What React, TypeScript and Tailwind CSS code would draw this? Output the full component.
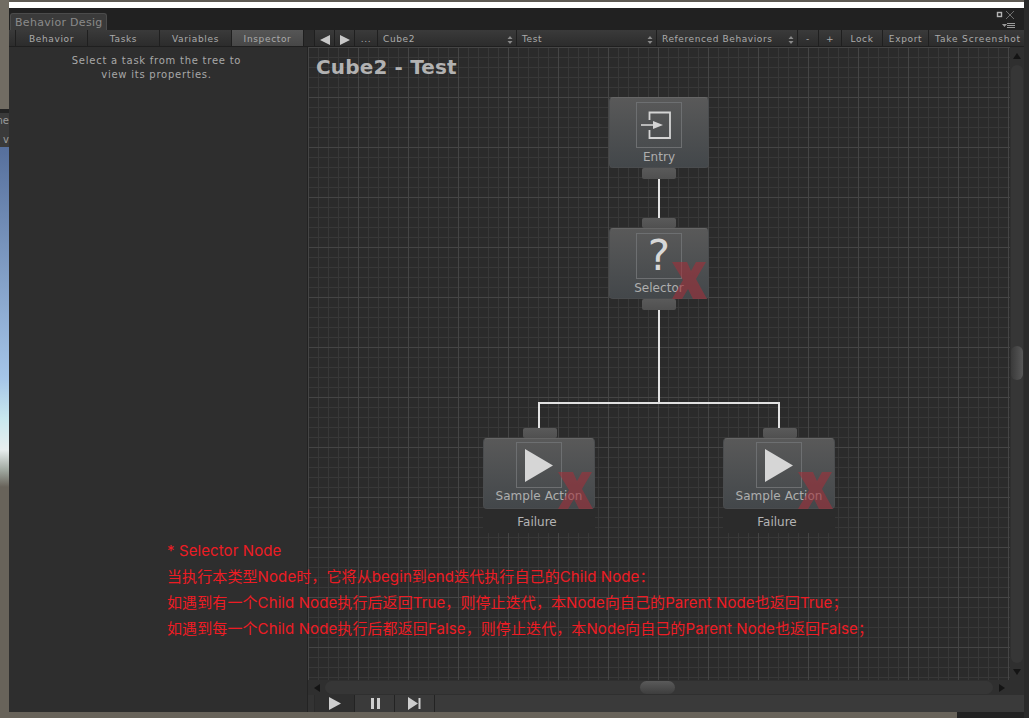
import React from "react";

const ui = { fontFamily: '"DejaVu Sans", sans-serif' };

function Spin() {
  return (
    <svg width="6" height="10" viewBox="0 0 6 10" className="shrink-0">
      <path d="M3 1 L5.5 4 H0.5 Z M3 9 L0.5 6 H5.5 Z" fill="#8a8a8a" />
    </svg>
  );
}

function Btn({ w, active, children, className = "" }: { w: string; active?: boolean; children?: React.ReactNode; className?: string }) {
  return (
    <div
      className={`${w} h-full shrink-0 flex items-center justify-center pt-[3px] border-r border-[#1f1f1f] text-[9px] tracking-[0.65px] text-[#ababab] ${
        active ? "bg-gradient-to-b from-[#565656] to-[#474747]" : "bg-gradient-to-b from-[#3a3a3a] to-[#2c2c2c]"
      } ${className}`}
    >
      {children}
    </div>
  );
}

function Drop({ w, label }: { w: string; label: string }) {
  return (
    <div className={`${w} h-full shrink-0 flex items-center justify-between pt-[3px] pl-[5px] pr-[3px] border-r border-[#1f1f1f] text-[9px] tracking-[0.6px] text-[#ababab] bg-gradient-to-b from-[#3a3a3a] to-[#2c2c2c]`}>
      <span className="whitespace-nowrap">{label}</span>
      <Spin />
    </div>
  );
}

function Connector({ h = "h-[10px]", ml = "" }: { h?: string; ml?: string }) {
  return <div className={`w-[34px] ${h} ${ml} bg-gradient-to-b from-[#5a5a5a] to-[#505050] rounded-[2px]`} />;
}

function NodeX() {
  return (
    <svg width="35" height="37" viewBox="0 0 35 37" className="absolute right-[1px] bottom-[-1px]">
      <path d="M0 0 H15 L19 9 L24 0 H34 L24 17 L35 37 H21 L16 27 L10 37 H0 L11 18 Z" fill="#a0303a" fillOpacity="0.6" />
    </svg>
  );
}

function EntryIcon() {
  return (
    <svg width="44" height="44" viewBox="0 0 44 44">
      <path d="M12.5 17 V9.5 H33 V35 H12.5 V27" fill="none" stroke="#d4d4d4" strokeWidth="1.8" />
      <path d="M4 22 H18" stroke="#d4d4d4" strokeWidth="1.6" />
      <path d="M16 18 L26 22 L16 26 Z" fill="#d4d4d4" />
    </svg>
  );
}

function PlayIcon() {
  return (
    <svg width="28" height="33" viewBox="0 0 28 33">
      <path d="M0 0 L28 16.5 L0 33 Z" fill="#d6d6d6" />
    </svg>
  );
}

function TaskNode({
  className,
  width,
  icon,
  label,
  failed,
  top = true,
  bottom = true,
  status,
  connectorMl = "",
  pad = "pt-[4px]",
  labelMt = "mt-[1px]",
}: {
  className: string;
  width: string;
  icon: React.ReactNode;
  label: string;
  failed?: boolean;
  top?: boolean;
  bottom?: boolean;
  status?: string;
  connectorMl?: string;
  pad?: string;
  labelMt?: string;
}) {
  return (
    <div className={`absolute flex flex-col items-center ${width} ${className}`}>
      {top ? <Connector ml={connectorMl} /> : null}
      <div className={`relative w-full h-[71px] rounded-[4px] border border-[#4a4c4e] border-t-[#666666] bg-gradient-to-b from-[#595959] to-[#43474a] flex flex-col items-center ${pad}`}>
        <div className="w-[46px] h-[46px] border border-[#6d6f71] flex items-center justify-center">{icon}</div>
        <div className={`${labelMt} text-[12px] leading-[16px] tracking-[0.05px] text-[#aeaeae] whitespace-nowrap`}>{label}</div>
        {failed ? <NodeX /> : null}
      </div>
      {bottom ? <Connector h="h-[11px]" /> : null}
      {status ? (
        <div className="w-full h-[24px] bg-[#2b2b2b] flex items-center justify-center pt-[2px] pr-[4px] text-[12px] text-[#b4b4b4]">{status}</div>
      ) : null}
    </div>
  );
}

export default function App() {
  return (
    <div className="w-[1029px] h-[718px] overflow-hidden flex bg-[#68635a] relative" style={ui}>
      {/* what lies behind the window, left */}
      <div className="w-[9px] h-full shrink-0 flex flex-col">
        <div className="h-[109px] shrink-0 bg-[#716c63]" />
        <div className="h-[4px] shrink-0 bg-[#232323]" />
        <div className="h-[34px] shrink-0 bg-[#3a3a3a] overflow-hidden text-[10px] leading-[13px] text-[#9a9a9a] flex flex-col items-end pt-[1px]">
          <div className="whitespace-nowrap">ne</div>
          <div className="mt-[6px]">v</div>
        </div>
        <div className="h-[340px] shrink-0 bg-[linear-gradient(to_bottom,#566f9c_0%,#a5c5e8_68%,#c8e8ee_80%,#e8eeee_89%,#a0a8a0_95%,#68635a_100%)]" />
        <div className="flex-1 bg-[#68635a]" />
      </div>

      {/* window column */}
      <div className="w-[1015px] shrink-0 h-full flex flex-col">
        <div className="h-[2px] bg-[#5e5a53]" />
        <div className="h-[6px] bg-white" />
        {/* tab strip */}
        <div className="relative h-[22px] bg-[#212121] flex items-end pl-[1px]">
          <div className="w-[97px] h-[17px] rounded-t-[3px] bg-[#3a3a3a] border border-b-0 border-[#4b4b4b] text-[11px] leading-[17px] tracking-[0.3px] pl-[4px] text-[#8a8a8a] whitespace-nowrap overflow-hidden">
            Behavior Desig
          </div>
          <svg width="28" height="20" viewBox="0 0 28 20" className="absolute right-0 top-[1px]">
            <rect x="1.5" y="3.5" width="4" height="4" fill="none" stroke="#b5b5b5" strokeWidth="1.4" />
            <path d="M10 2 L18 10 M18 2 L10 10" stroke="#6f6f6f" strokeWidth="1" />
            <path d="M6 15 H11 L8.5 18 Z" fill="#9a9a9a" />
            <path d="M11 14.5 H19 M11 16.5 H19 M11 18.5 H19" stroke="#9a9a9a" strokeWidth="1" />
          </svg>
        </div>
        {/* toolbar */}
        <div className="h-[17px] flex bg-[#2a2a2a] border-b border-[#1f1f1f]">
          <div className="w-[7px] h-full bg-gradient-to-b from-[#3a3a3a] to-[#2c2c2c] border-r border-[#1f1f1f]" />
          <Btn w="w-[72px]">Behavior</Btn>
          <Btn w="w-[72px]">Tasks</Btn>
          <Btn w="w-[72px]">Variables</Btn>
          <Btn w="w-[72px]" active>
            Inspector
          </Btn>
          <div className="w-[11px] h-full bg-[#2c2c2c] border-r border-[#1f1f1f]" />
          <Btn w="w-[20px]">
            <svg width="10" height="10" viewBox="0 0 10 10"><path d="M10 0 V10 L0 5 Z" fill="#c8c8c8" /></svg>
          </Btn>
          <Btn w="w-[20px]">
            <svg width="10" height="10" viewBox="0 0 10 10"><path d="M0 0 V10 L10 5 Z" fill="#c8c8c8" /></svg>
          </Btn>
          <Btn w="w-[23px]">...</Btn>
          <Drop w="w-[139px]" label="Cube2" />
          <Drop w="w-[140px]" label="Test" />
          <Drop w="w-[141px]" label="Referenced Behaviors" />
          <Btn w="w-[21px]">-</Btn>
          <Btn w="w-[23px]">+</Btn>
          <Btn w="w-[41px]">Lock</Btn>
          <Btn w="w-[46px]">Export</Btn>
          <div className="flex-1 h-full flex items-center justify-center pt-[3px] pl-[3px] text-[9px] tracking-[0.85px] text-[#ababab] whitespace-nowrap bg-gradient-to-b from-[#3a3a3a] to-[#2c2c2c]">
            Take Screenshot
          </div>
        </div>

        {/* body */}
        <div className="flex-1 flex min-h-0">
          {/* inspector */}
          <div className="w-[299px] shrink-0 h-full bg-[#2e2e2e] border-r border-[#232323] text-center text-[10px] leading-[14px] tracking-[0.75px] text-[#a8a8a8] pt-[7px] pr-[3px]">
            <div>Select a task from the tree to</div>
            <div>view its properties.</div>
          </div>
          {/* graph + bars */}
          <div className="flex-1 min-w-0 flex flex-col">
            <div className="flex-1 min-h-0 flex">
              <div className="relative flex-1 overflow-hidden bg-[#2b2b2b] bg-[linear-gradient(to_right,#454545_1px,transparent_1px),linear-gradient(to_bottom,#454545_1px,transparent_1px),linear-gradient(to_right,#383838_1px,transparent_1px),linear-gradient(to_bottom,#383838_1px,transparent_1px)] bg-[size:50px_50px,50px_50px,10px_10px,10px_10px]">
                <div className="absolute left-[8px] top-[6px] text-[20px] leading-[28px] font-bold tracking-[0.15px] text-[#b2b2b2] whitespace-nowrap">Cube2 - Test</div>

                {/* links */}
                <svg width="701" height="633" className="absolute left-0 top-0">
                  <path d="M351 132 V172 M351 262 V356 M231 382 V356 H471 V382" fill="none" stroke="#e2e2e2" strokeWidth="2" />
                </svg>

                <TaskNode className="left-[301px] top-[50px]" width="w-[100px]" top={false} icon={<EntryIcon />} label="Entry" />
                <TaskNode
                  className="left-[301px] top-[171px]"
                  width="w-[100px]"
                  failed
                  icon={<span className="text-[42px] leading-[44px] text-[#d8d8d8]">?</span>}
                  label="Selector"
                />
                <TaskNode className="left-[175px] top-[381px]" width="w-[112px]" failed bottom={false} icon={<PlayIcon />} label="Sample Action" status="Failure" connectorMl="ml-[2px]" pad="pt-[3px]" labelMt="mt-0" />
                <TaskNode className="left-[415px] top-[381px]" width="w-[112px]" failed bottom={false} icon={<PlayIcon />} label="Sample Action" status="Failure" connectorMl="ml-[2px]" pad="pt-[3px]" labelMt="mt-0" />
              </div>
              {/* vertical scrollbar */}
              <div className="w-[14px] shrink-0 h-full bg-[#2f2f2f] flex flex-col items-center">
                <div className="h-[18px] w-full flex items-center justify-center">
                  <svg width="8" height="6" viewBox="0 0 8 6"><path d="M4 0 L8 6 H0 Z" fill="#141414" /></svg>
                </div>
                <div className="flex-1 w-full relative">
                  <div className="absolute left-[1px] right-[1px] top-0 bottom-0 rounded-full bg-[#363636]" />
                  <div className="absolute left-[1px] right-[1px] top-[281px] h-[34px] rounded-full bg-gradient-to-r from-[#3a3a3a] to-[#585858]" />
                </div>
                <div className="h-[17px] w-full flex items-center justify-center">
                  <svg width="8" height="6" viewBox="0 0 8 6"><path d="M4 6 L8 0 H0 Z" fill="#141414" /></svg>
                </div>
              </div>
            </div>
            {/* horizontal scrollbar */}
            <div className="h-[15px] shrink-0 flex items-center bg-[#2f2f2f] pr-[14px]">
              <div className="w-[17px] flex justify-center">
                <svg width="6" height="8" viewBox="0 0 6 8"><path d="M0 4 L6 0 V8 Z" fill="#141414" /></svg>
              </div>
              <div className="flex-1 h-[13px] relative">
                <div className="absolute inset-0 rounded-full bg-[#363636]" />
                <div className="absolute left-[315px] top-0 h-[13px] w-[35px] rounded-full bg-gradient-to-b from-[#5a5a5a] to-[#3e3e3e]" />
              </div>
              <div className="w-[17px] flex justify-center">
                <svg width="6" height="8" viewBox="0 0 6 8"><path d="M6 4 L0 0 V8 Z" fill="#141414" /></svg>
              </div>
            </div>
            {/* playback */}
            <div className="h-[17px] shrink-0 flex bg-[#3a3a3a]">
              <div className="w-[7px] h-full bg-[#333333] border-r border-[#2a2a2a]" />
              <div className="w-[40px] h-full flex items-center justify-center border-r border-[#232323] bg-[#2f2f2f]">
                <svg width="12" height="13" viewBox="0 0 12 13"><path d="M0 0 L12 6.5 L0 13 Z" fill="#cfcfcf" /></svg>
              </div>
              <div className="w-[40px] h-full flex items-center justify-center border-r border-[#232323] pl-[2px]">
                <svg width="9" height="11" viewBox="0 0 9 11"><path d="M0 0 H3 V11 H0 Z M6 0 H9 V11 H6 Z" fill="#cfcfcf" /></svg>
              </div>
              <div className="w-[40px] h-full flex items-center justify-center border-r border-[#232323]">
                <svg width="13" height="13" viewBox="0 0 13 13"><path d="M0 0 L10 6.5 L0 13 Z M10.5 1 H12.5 V12 H10.5 Z" fill="#cfcfcf" /></svg>
              </div>
            </div>
          </div>
        </div>
        {/* what lies behind the window, bottom */}
        <div className="h-[6px] shrink-0 flex">
          <div className="w-[948px] bg-[#68635a]" />
          <div className="flex-1 bg-[#222222]" />
        </div>
      </div>

      {/* right edge */}
      <div className="flex-1 h-full bg-[#2a2a2a]" />

      {/* annotation */}
      <div
        className="absolute left-[167px] top-[538px] text-[15px] leading-[26px] tracking-[0.1px] text-[#ed1c24] whitespace-nowrap"
        style={{ fontFamily: 'Inter, "Noto Sans CJK SC", sans-serif' }}
      >
        <div>* Selector Node</div>
        <div>当执行本类型Node时，它将从begin到end迭代执行自己的Child Node：</div>
        <div>如遇到有一个Child Node执行后返回True，则停止迭代，本Node向自己的Parent Node也返回True；</div>
        <div>如遇到每一个Child Node执行后都返回False，则停止迭代，本Node向自己的Parent Node也返回False；</div>
      </div>
    </div>
  );
}
